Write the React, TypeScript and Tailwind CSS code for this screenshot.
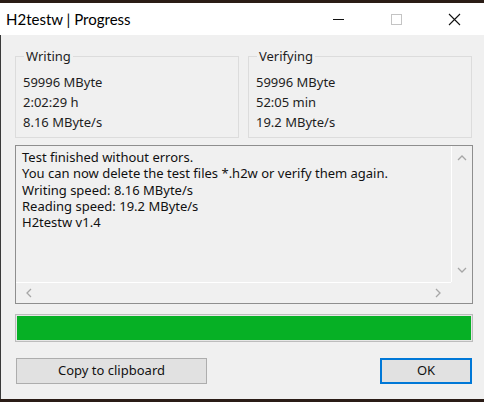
import React from "react";

const ui = { fontFamily: '"Noto Sans", "Open Sans", Arial, sans-serif' };

function Chevron({ dir }: { dir: "up" | "down" | "left" | "right" }) {
  const d = {
    up: "M1 6 L5 2 L9 6",
    down: "M1 2 L5 6 L9 2",
    left: "M6 1 L2 5 L6 9",
    right: "M2 1 L6 5 L2 9",
  }[dir];
  const vert = dir === "up" || dir === "down";
  return (
    <svg width={vert ? 10 : 8} height={vert ? 8 : 10} viewBox={vert ? "0 0 10 8" : "0 0 8 10"}>
      <path d={d} fill="none" stroke="#a6a6a6" strokeWidth="1.3" />
    </svg>
  );
}

function Group({ title, lines }: { title: string; lines: string[] }) {
  return (
    <fieldset className="w-[224px] h-[90px] border border-[#dcdcdc] pl-[7px] pt-[8px]">
      <legend className="ml-[1px] px-[2px] text-[13px] leading-[16px] text-[#1e1e1e]">{title}</legend>
      {lines.map((l) => (
        <div key={l} className="text-[13px] leading-[20px] text-[#1e1e1e]">
          {l}
        </div>
      ))}
    </fieldset>
  );
}

export default function App() {
  return (
    <div className="w-[484px] h-[402px] bg-[#2a1c16] pt-[3px] pb-[3px] flex flex-col" style={ui}>
      {/* title bar */}
      <div className="h-[32px] bg-white flex items-center">
        <div className="pl-[6px] text-[15px] text-black flex-1 font-['Lato',sans-serif]">H2testw | Progress</div>
        <div className="w-[58px] h-full flex items-center justify-center">
          <div className="w-[11px] h-px bg-[#111]" />
        </div>
        <div className="w-[58px] h-full flex items-center justify-center">
          <div className="w-[11px] h-[11px] border border-[#c4c4c4]" />
        </div>
        <div className="w-[58px] h-full flex items-center justify-center mr-px">
          <svg width="13" height="13" viewBox="0 0 13 13">
            <path d="M1 1 L12 12 M12 1 L1 12" stroke="#111" strokeWidth="1.1" />
          </svg>
        </div>
      </div>

      {/* body */}
      <div className="flex-1 bg-[#f0f0f0] border-l border-[#3a3a3a] pl-[14px] pr-[11px] pt-[13px]">
        <div className="flex gap-[9px]">
          <Group title="Writing" lines={["59996 MByte", "2:02:29 h", "8.16 MByte/s"]} />
          <Group title="Verifying" lines={["59996 MByte", "52:05 min", "19.2 MByte/s"]} />
        </div>

        {/* log */}
        <div className="mt-[7px] h-[159px] border border-[#8e8e8e] grid grid-cols-[1fr_21px] grid-rows-[1fr_21px]">
          <div className="pl-[6px] pt-[3px] text-[13px] leading-[16.3px] text-[#111]">
            <div>Test finished without errors.</div>
            <div>You can now delete the test files *.h2w or verify them again.</div>
            <div>Writing speed: 8.16 MByte/s</div>
            <div>Reading speed: 19.2 MByte/s</div>
            <div>H2testw v1.4</div>
          </div>
          <div className="border-l border-white flex flex-col items-center justify-between py-[8px]">
            <Chevron dir="up" />
            <Chevron dir="down" />
          </div>
          <div className="border-t border-white flex items-center justify-between px-[9px]">
            <Chevron dir="left" />
            <Chevron dir="right" />
          </div>
          <div className="bg-[#f0f0f0]" />
        </div>

        {/* progress */}
        <div className="mt-[10px] h-[28px] border border-[#bcbcbc] bg-[#e6e6e6] p-px">
          <div className="h-full w-full bg-[#06b025]" />
        </div>

        {/* buttons */}
        <div className="mt-[16px] flex justify-between pl-px pr-[1px]">
          <button className="w-[191px] h-[26px] bg-[#e1e1e1] border border-[#adadad] text-[13px] text-[#111]">
            Copy to clipboard
          </button>
          <button className="w-[92px] h-[26px] bg-[#e1e1e1] border-2 border-[#0078d7] text-[13px] text-[#111]">
            OK
          </button>
        </div>
      </div>
    </div>
  );
}
